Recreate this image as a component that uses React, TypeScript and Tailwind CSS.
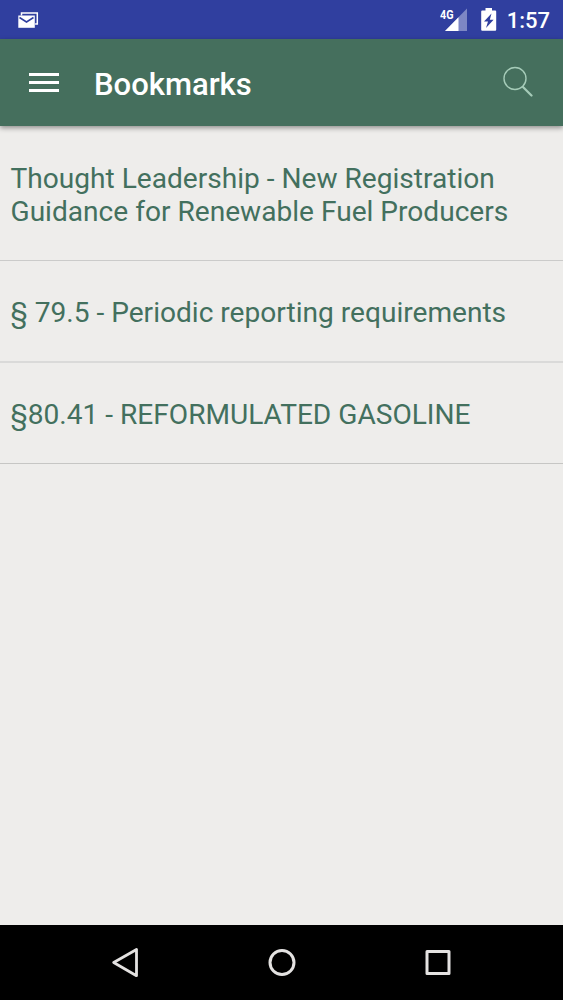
import clsx from "clsx";

const bookmarks = [
  {
    id: 1,
    lines: ["Thought Leadership - New Registration", "Guidance for Renewable Fuel Producers"],
    row: "h-[135px] border-b pt-1 border-[#cbcbca]",
  },
  {
    id: 2,
    lines: ["§ 79.5 - Periodic reporting requirements"],
    row: "h-[102px] border-b-2 pt-[3px] border-[#dadad9]",
  },
  {
    id: 3,
    lines: ["§80.41 - REFORMULATED GASOLINE"],
    row: "h-[101px] border-b pt-0.5 border-[#c6c6c4]",
  },
];

function StatusBar() {
  return (
    <div className="flex h-[39px] shrink-0 items-start bg-[#303f9f] text-white">
      {/* Mail notification */}
      <svg className="mt-3 ml-[18px]" width="21" height="17" viewBox="0 0 21 17">
        <path d="M3.5 3.4V1h15.8v11h-2.2" fill="none" stroke="#fff" strokeWidth="1.5" />
        <path d="M.3 3.5h16.5v12.3H.3z" fill="#fff" />
        <path d="M1.5 5.5l7 4.5 7-4.5" fill="none" stroke="#303f9f" strokeWidth="1.5" />
      </svg>
      <div className="flex-1" />
      {/* Mobile signal */}
      <svg width="28" height="31" viewBox="0 -8 28 31">
        <path d="M27 .5V23H5z" fill="#7d87c4" />
        <path d="M18.5 9.2V23H5z" fill="#fff" />
        <path d="M0 0h14v12H0z" fill="#303f9f" />
        <text x="0" y="10.5" fill="#fff" fontSize="13.5" fontWeight="700" fontFamily="Roboto, sans-serif" textLength="13.5" lengthAdjust="spacingAndGlyphs">
          4G
        </text>
      </svg>
      {/* Battery */}
      <svg className="mt-2 ml-[13px]" width="16" height="23" viewBox="0 0 16 23">
        <path d="M4.5 0H11v2.5h3.2q1 0 1 1v18.2q0 1-1 1H1.2q-1 0-1-1V3.5q0-1 1-1h3.3z" fill="#fff" />
        <path d="M10.5 5.5L3 13.5h4L5 20l7.6-8.300H8.800z" fill="#303f9f" />
      </svg>
      <span className="mt-2 mr-[13px] ml-2.5 text-[22px] leading-[26px] font-medium">1:57</span>
    </div>
  );
}

function Header() {
  return (
    <header className="z-10 flex h-[87px] shrink-0 items-center bg-[#456f5d] text-white shadow-[0_2px_5px_rgba(0,0,0,0.4)]">
      <button className="ml-[29px] flex w-[30px] flex-col gap-[5px]" aria-label="Menu">
        <span className="h-[3px] w-full bg-white" />
        <span className="h-[3px] w-full bg-white" />
        <span className="h-[3px] w-full bg-white" />
      </button>
      <h1 className="mt-[5px] ml-[35px] flex-1 text-[31px] leading-9 font-medium">Bookmarks</h1>
      <button className="mr-[30px] mb-0.5" aria-label="Search">
        <svg width="31" height="31" viewBox="0 0 31 31" fill="none" stroke="#a5cbb8">
          <circle cx="13" cy="12.5" r="11" strokeWidth="1.4" />
          <path d="M21 21l8.5 8.5" strokeWidth="2.2" strokeLinecap="round" />
        </svg>
      </button>
    </header>
  );
}

function NavigationBar() {
  return (
    <nav className="flex h-[75px] shrink-0 items-center justify-center gap-[129px] bg-black pr-0.5">
      <svg width="28" height="30" viewBox="0 0 28 30" fill="none" stroke="#e4e2e1" strokeWidth="2.8" strokeLinejoin="round">
        <path d="M2.7 14.5L25.5 1.5v26.2z" />
      </svg>
      <svg width="28" height="28" viewBox="0 0 28 28" fill="none" stroke="#e4e2e1" strokeWidth="3">
        <circle cx="14" cy="13.5" r="12" />
      </svg>
      <svg width="26" height="26" viewBox="0 0 26 26" fill="none" stroke="#e4e2e1" strokeWidth="3" strokeLinejoin="round">
        <path d="M2 1.5h22v22H2z" />
      </svg>
    </nav>
  );
}

export default function App() {
  return (
    <div className="flex h-screen w-full flex-col overflow-hidden bg-[#eeedeb] font-[Roboto,sans-serif]">
      <StatusBar />
      <Header />
      <ul className="flex-1">
        {bookmarks.map((b) => (
          <li key={b.id} className={clsx("flex flex-col justify-center pl-[10.5px]", b.row)}>
            {b.lines.map((line) => (
              <span key={line} className="text-[28.1px] leading-[33px] whitespace-nowrap text-[#43705e]">
                {line}
              </span>
            ))}
          </li>
        ))}
      </ul>
      <NavigationBar />
    </div>
  );
}
